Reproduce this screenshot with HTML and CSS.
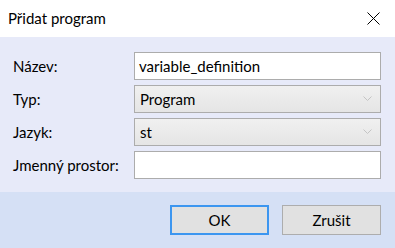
FILE: index.html
```html
<!DOCTYPE html>
<html>
    <head>
        <title>Přidat program</title>
        <meta charset="UTF-8">
        <link rel="stylesheet" href="styles.css">
    </head>
    <body>
        <div id="dialog">
            <div class="titlebar">
                <span class="title">Přidat program</span>
                <svg class="close" width="13" height="13" viewBox="0 0 13 13">
                    <path d="M0.5 0.5 L12.5 12.5 M12.5 0.5 L0.5 12.5" stroke="#000" stroke-width="1" fill="none"/>
                </svg>
            </div>

            <div class="content">
                <div class="frow">
                    <label>Název:</label>
                    <div class="field">variable_definition</div>
                </div>
                <div class="frow">
                    <label>Typ:</label>
                    <div class="field combo">
                        <span>Program</span>
                        <svg width="9" height="5" viewBox="0 0 9 5"><path d="M0.5 0.5 L4.5 4.5 L8.5 0.5" stroke="#c4c4c4" fill="none"/></svg>
                    </div>
                </div>
                <div class="frow">
                    <label>Jazyk:</label>
                    <div class="field combo">
                        <span>st</span>
                        <svg width="9" height="5" viewBox="0 0 9 5"><path d="M0.5 0.5 L4.5 4.5 L8.5 0.5" stroke="#c4c4c4" fill="none"/></svg>
                    </div>
                </div>
                <div class="frow">
                    <label>Jmenný prostor:</label>
                    <div class="field"></div>
                </div>
            </div>

            <div class="footer">
                <button class="btn focused">OK</button>
                <button class="btn">Zrušit</button>
            </div>
        </div>
    </body>
</html>
```

FILE: styles.css
```css
body {
    margin: 0;
    font-family: "Lato", "Noto Sans", sans-serif;
    color: #000;
}

#dialog {
    width: 395px;
    height: 248px;
    display: flex;
    flex-direction: column;
}

.titlebar {
    height: 37px;
    background: #fff;
    display: flex;
    align-items: center;
    justify-content: space-between;
    padding: 0 15px 0 8px;
    box-sizing: border-box;
}

.title {
    font-size: 15px;
    margin-top: -1px;
}

.close {
    margin-top: -1px;
}

.content {
    background: #e7eaf9;
    height: 155px;
    padding: 15px 14px 0 13px;
    box-sizing: border-box;
    display: flex;
    flex-direction: column;
    gap: 5px;
}

.frow {
    display: flex;
    align-items: center;
}

.frow label {
    width: 121px;
    font-size: 15px;
}

.field {
    flex: 1;
    height: 28px;
    box-sizing: border-box;
    border: 1px solid #acacac;
    background: #fff;
    font-size: 15px;
    padding: 0 4px 1px 4px;
    display: flex;
    align-items: center;
}

.combo {
    background: linear-gradient(#f0f0f0, #e5e5e5);
    justify-content: space-between;
    padding: 0 8px 1px 5px;
}

.footer {
    flex: 1;
    background: #d5e0f5;
    display: flex;
    justify-content: flex-end;
    align-items: flex-start;
    gap: 13px;
    padding: 13px 14px 0 0;
}

.btn {
    width: 99px;
    height: 30px;
    background: #e1e1e1;
    border: 1px solid #adadad;
    font-family: inherit;
    font-size: 15px;
    color: #000;
    padding: 0 0 1px 0;
}

.btn.focused {
    border: 2px solid #3c96f0;
}
```
